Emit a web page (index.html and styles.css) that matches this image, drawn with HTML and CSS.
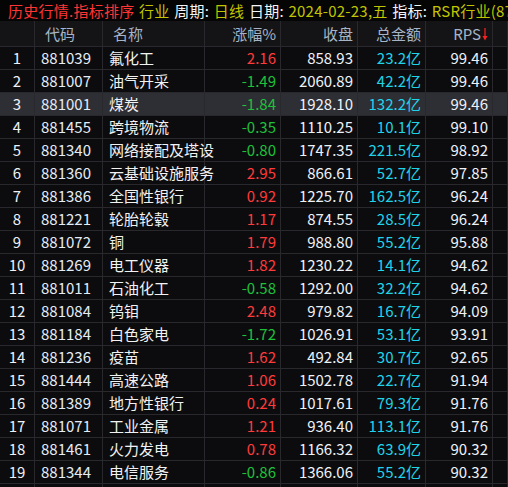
FILE: index.html
```html
<!DOCTYPE html>
<html lang="zh">
<head>
  <meta charset="UTF-8" />
  <title>历史行情.指标排序</title>
  <link rel="stylesheet" href="styles.css">
</head>
<body>
  <div class="titlebar">
    <span class="red">历史行情.指标排序</span>
    <span class="yellow">行业</span>
    <span>周期:</span>
    <span class="yellow">日线</span>
    <span>日期:</span>
    <span class="yellow">2024-02-23,五</span>
    <span>指标:</span>
    <span class="yellow">RSR行业(87)</span>
  </div>

  <div class="grid">
    <div class="row head">
      <div class="cell"></div>
      <div class="cell left">代码</div>
      <div class="cell left">名称</div>
      <div class="cell">涨幅%</div>
      <div class="cell">收盘</div>
      <div class="cell">总金额</div>
      <div class="cell">RPS<svg class="arrow" width="6" height="13" viewBox="0 0 6 13"><path d="M3 0V11" stroke="#ff2020" stroke-width="1.2"/><path d="M0.5 8L3 12.5L5.5 8Z" fill="#ff2020"/></svg></div>
      <div class="cell"></div>
    </div>
    <div id="rows"></div>
  </div>

  <script>
    const data = [
      ['881039', '氟化工', '2.16', '858.93', '23.2', '99.46'],
      ['881007', '油气开采', '-1.49', '2060.89', '42.2', '99.46'],
      ['881001', '煤炭', '-1.84', '1928.10', '132.2', '99.46'],
      ['881455', '跨境物流', '-0.35', '1110.25', '10.1', '99.10'],
      ['881340', '网络接配及塔设', '-0.80', '1747.35', '221.5', '98.92'],
      ['881360', '云基础设施服务', '2.95', '866.61', '52.7', '97.85'],
      ['881386', '全国性银行', '0.92', '1225.70', '162.5', '96.24'],
      ['881221', '轮胎轮毂', '1.17', '874.55', '28.5', '96.24'],
      ['881072', '铜', '1.79', '988.80', '55.2', '95.88'],
      ['881269', '电工仪器', '1.82', '1230.22', '14.1', '94.62'],
      ['881011', '石油化工', '-0.58', '1292.00', '32.2', '94.62'],
      ['881084', '钨钼', '2.48', '979.82', '16.7', '94.09'],
      ['881184', '白色家电', '-1.72', '1026.91', '53.1', '93.91'],
      ['881236', '疫苗', '1.62', '492.84', '30.7', '92.65'],
      ['881444', '高速公路', '1.06', '1502.78', '22.7', '91.94'],
      ['881389', '地方性银行', '0.24', '1017.61', '79.3', '91.76'],
      ['881071', '工业金属', '1.21', '936.40', '113.1', '91.76'],
      ['881461', '火力发电', '0.78', '1166.32', '63.9', '90.32'],
      ['881344', '电信服务', '-0.86', '1366.06', '55.2', '90.32'],
      ['', '', '', '', '', '']
    ];

    const rows = document.getElementById('rows');
    data.forEach((d, i) => {
      const [code, name, chg, close, amount, rps] = d;
      const dir = chg.startsWith('-') ? 'down' : 'up';
      rows.innerHTML += `
        <div class="row${i === 2 ? ' selected' : ''}">
          <div class="cell center">${code ? i + 1 : ''}</div>
          <div class="cell left code">${code}</div>
          <div class="cell left name">${name}</div>
          <div class="cell ${dir}">${chg}</div>
          <div class="cell">${close}</div>
          <div class="cell cyan">${amount ? amount + '亿' : ''}</div>
          <div class="cell">${rps}</div>
          <div class="cell"></div>
        </div>
      `;
    });
  </script>
</body>
</html>
```

FILE: styles.css
```css
body {
  margin: 0;
  background-color: #0c0c0e;
  color: #eef2f8;
  font-family: "Noto Sans CJK SC", "Noto Sans", sans-serif;
  font-size: 15px;
  overflow: hidden;
}

.titlebar {
  height: 21px;
  line-height: 21px;
  padding-left: 8px;
  background-color: #050505;
  white-space: nowrap;
  overflow: hidden;
  color: #f4f4f4;
  letter-spacing: 0.25px;
  word-spacing: 1px;
}

.red { color: #ff3535; }
.yellow { color: #c2c400; }

.row {
  display: grid;
  grid-template-columns: 35px 68px 102px 76px 77px 68px 67px 1fr;
  height: 23px;
  border-bottom: 1px solid #29292d;
  box-sizing: border-box;
}

.row.head {
  height: 26px;
  background-color: #141417;
  color: #a6b4c6;
}

.row.selected {
  background-color: #2e2e35;
}

.cell {
  border-right: 1px solid #29292d;
  box-sizing: border-box;
  padding: 0 4px 0 0;
  text-align: right;
  line-height: 22px;
  white-space: nowrap;
}

.head .cell {
  line-height: 25px;
  display: flex;
  align-items: center;
  justify-content: flex-end;
}

.head .cell.left {
  justify-content: flex-start;
  padding-left: 10px;
}

.arrow {
  margin-left: 1px;
  margin-top: 2px;
}

.cell.left {
  text-align: left;
  padding-left: 6px;
}

.cell.center {
  text-align: center;
  padding: 0;
}

.code { color: #e4ecf6; }
.name { color: #f2f2f2; }

.up { color: #ff3b3b; }
.down { color: #1ec13a; }
.cyan { color: #1fd4ea; }
```
